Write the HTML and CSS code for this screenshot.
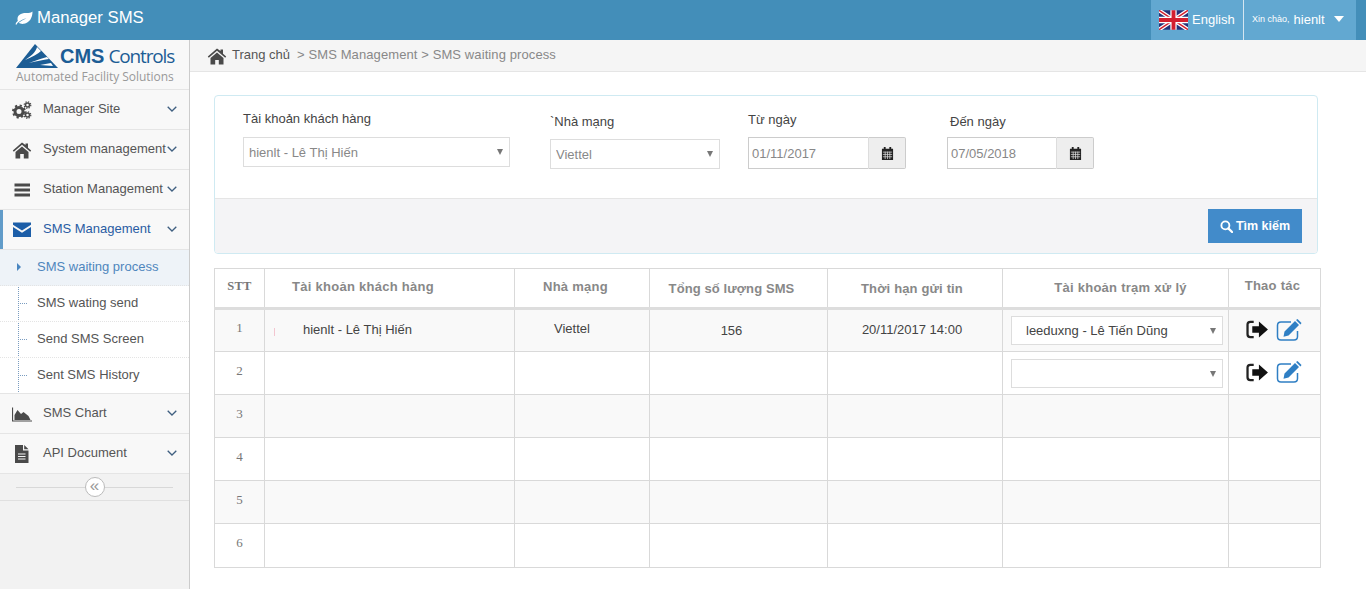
FILE: index.html
```html
<!DOCTYPE html>
<html lang="vi">
<head>
<meta charset="utf-8">
<title>Manager SMS</title>
<link rel="stylesheet" href="styles.css">
</head>
<body>
<header class="topbar">
  <div class="brand">
    <svg class="brand-leaf" viewBox="0 0 18 14"><path d="M17.5 .6C16 2 14.500 2 11 2 5.500 2 2.500 4.500 2.500 8c0 .8.100 1.300.300 1.900C1.500 11 .800 12 .500 13.200l.900.500C2 12.500 2.900 11.500 4 10.800 6.500 8.800 9 7.800 11.500 7.200 9 8.300 6 10 3.800 11.800 5 12.800 7 13.100 9 12.800c5.500-.8 8.500-6 8.500-12.200z"/></svg>
    <span>Manager SMS</span>
  </div>
  <div class="top-actions">
    <div class="lang">
      <svg class="flag" viewBox="0 0 60 40">
        <rect width="60" height="40" fill="#24337a"/>
        <path d="M0 0L60 40M60 0L0 40" stroke="#fff" stroke-width="8"/>
        <path d="M0 0L60 40M60 0L0 40" stroke="#d3202f" stroke-width="3"/>
        <path d="M30 0V40M0 20H60" stroke="#fff" stroke-width="13"/>
        <path d="M30 0V40M0 20H60" stroke="#d3202f" stroke-width="8"/>
      </svg>
      <span>English</span>
    </div>
    <div class="user">
      <small>Xin chào,</small>
      <span>hienlt</span>
      <i class="caret"></i>
    </div>
  </div>
</header>
<div class="shell">
  <aside class="sidebar">
    <div class="logo">
      <div class="logo-row">
        <svg class="logo-mark" viewBox="0 0 42 24">
          <path d="M19 0L42 24H0z" fill="#1c5d95"/>
          <path d="M21 3c-1 5-6 9-12 13 7-3 13-6 16-9zM13 19c8-3 14-5 18-6l2 2c-6 1-13 2-20 4zM24 21l11-2 2 3z" fill="#fff"/>
        </svg>
        <span class="logo-cms">CMS</span>
        <span class="logo-controls">Controls</span>
      </div>
      <div class="logo-tag">Automated Facility Solutions</div>
    </div>
    <nav>
      <a class="nav-item">
        <svg class="nav-icon" viewBox="0 0 20 18"><circle cx="7" cy="10.500" r="4" fill="none" stroke="#4a4a4a" stroke-width="3"/><circle cx="7" cy="10.500" r="6" fill="none" stroke="#4a4a4a" stroke-width="2" stroke-dasharray="2.200 2.500"/><circle cx="15.500" cy="4" r="2" fill="none" stroke="#4a4a4a" stroke-width="1.500"/><circle cx="15.500" cy="4" r="3.300" fill="none" stroke="#4a4a4a" stroke-width="1.200" stroke-dasharray="1.300 1.300"/><circle cx="15.500" cy="14" r="2" fill="none" stroke="#4a4a4a" stroke-width="1.500"/><circle cx="15.500" cy="14" r="3.300" fill="none" stroke="#4a4a4a" stroke-width="1.200" stroke-dasharray="1.300 1.300"/></svg>
        <span>Manager Site</span>
        <svg class="chev" viewBox="0 0 10 6"><path d="M.7.7L5 5 9.300.7"/></svg>
      </a>
      <a class="nav-item">
        <svg class="nav-icon" viewBox="0 0 20 18"><path d="M10 1.500L.8 9.600l1 1.200L10 3.700l8.200 7.100 1-1.200-3.200-2.800V2.500h-2.500v1.600zM3.500 11v6.500h4.700v-4.500h3.600v4.500h4.700V11L10 5.400z" fill="#4a4a4a"/></svg>
        <span>System management</span>
        <svg class="chev" viewBox="0 0 10 6"><path d="M.7.7L5 5 9.300.7"/></svg>
      </a>
      <a class="nav-item">
        <svg class="nav-icon" viewBox="0 0 20 18"><path d="M2.500 2.500h15.500v3H2.500zM2.500 7.500h15.500v3H2.500zM2.500 12.500h15.500v3H2.500z" fill="#4a4a4a"/></svg>
        <span>Station Management</span>
        <svg class="chev" viewBox="0 0 10 6"><path d="M.7.7L5 5 9.300.7"/></svg>
      </a>
      <a class="nav-item nav-open">
        <svg class="nav-icon" viewBox="0 0 20 18"><path d="M1 1.500h18v2.300L10 9.500 1 3.800zM1 6l9 5.800L19 6v10H1z" fill="#1c5ea8"/></svg>
        <span>SMS Management</span>
        <svg class="chev" viewBox="0 0 10 6"><path d="M.7.7L5 5 9.300.7"/></svg>
      </a>
      <ul class="subnav">
        <li class="sub-active">SMS waiting process</li>
        <li>SMS wating send</li>
        <li>Send SMS Screen</li>
        <li>Sent SMS History</li>
      </ul>
      <a class="nav-item">
        <svg class="nav-icon" viewBox="0 0 20 18"><path d="M.5 2.500V16H20" fill="none" stroke="#4a4a4a" stroke-width="1.200"/><path d="M2.500 15V10l3-5 3.500 4 2.500-2 5 4 2 4z" fill="#4a4a4a"/></svg>
        <span>SMS Chart</span>
        <svg class="chev" viewBox="0 0 10 6"><path d="M.7.7L5 5 9.300.7"/></svg>
      </a>
      <a class="nav-item">
        <svg class="nav-icon" viewBox="0 0 20 18"><path d="M3 0h8v5.500h5.500V18H3zM12.200 0l4.300 4.300h-4.300z" fill="#4a4a4a"/><path d="M6 9h7.500M6 11.500h7.500M6 14h7.500" stroke="#f5f5f5" stroke-width="1.200"/></svg>
        <span>API Document</span>
        <svg class="chev" viewBox="0 0 10 6"><path d="M.7.7L5 5 9.300.7"/></svg>
      </a>
    </nav>
    <div class="collapse">
      <button class="collapse-btn" type="button">«</button>
    </div>
  </aside>
  <main class="content">
    <div class="breadcrumb">
      <svg class="crumb-home" viewBox="0 0 20 18"><path d="M10 1.500L.8 9.600l1 1.200L10 3.700l8.200 7.100 1-1.200-3.200-2.800V2.500h-2.500v1.600zM3.500 11v6.500h4.700v-4.500h3.600v4.500h4.700V11L10 5.400z" fill="#4a4a4a"/></svg>
      <span class="crumb-first">Trang chủ</span>
      <span class="crumb-rest">&gt; SMS Management &gt; SMS waiting process</span>
    </div>
    <div class="page">
      <section class="filter">
        <div class="filter-body">
          <div class="field field-account">
            <label>Tài khoản khách hàng</label>
            <div class="select-wrap"><select><option>hienlt - Lê Thị Hiến</option></select></div>
          </div>
          <div class="field field-network">
            <label>`Nhà mạng</label>
            <div class="select-wrap"><select><option>Viettel</option></select></div>
          </div>
          <div class="field field-from">
            <label>Từ ngày</label>
            <div class="date-group">
              <input type="text" value="01/11/2017">
              <span class="date-addon"><svg class="cal" viewBox="0 0 14 14"><path d="M3 0h2v2.500H3zM9 0h2v2.500H9z" fill="#222"/><path d="M1 2h12v12H1z" fill="#222"/><path d="M2 5.500h10M2 8h10M2 10.500h10M4.500 5v8M7 5v8M9.500 5v8" stroke="#ddd" stroke-width=".8"/></svg></span>
            </div>
          </div>
          <div class="field field-to">
            <label>Đến ngày</label>
            <div class="date-group">
              <input type="text" value="07/05/2018">
              <span class="date-addon"><svg class="cal" viewBox="0 0 14 14"><path d="M3 0h2v2.500H3zM9 0h2v2.500H9z" fill="#222"/><path d="M1 2h12v12H1z" fill="#222"/><path d="M2 5.500h10M2 8h10M2 10.500h10M4.500 5v8M7 5v8M9.500 5v8" stroke="#ddd" stroke-width=".8"/></svg></span>
            </div>
          </div>
        </div>
        <div class="filter-foot">
          <button class="btn-search" type="button">
            <svg class="search-ico" viewBox="0 0 14 14"><circle cx="5.800" cy="5.800" r="4.300" fill="none" stroke="#fff" stroke-width="2"/><path d="M9 9l4 4" stroke="#fff" stroke-width="2.400" stroke-linecap="round"/></svg>
            <span>Tìm kiếm</span>
          </button>
        </div>
      </section>
      <table class="grid">
        <thead>
          <tr>
            <th class="c-stt">STT</th>
            <th class="c-acc">Tài khoản khách hàng</th>
            <th class="c-net">Nhà mạng</th>
            <th class="c-total">Tổng số lượng SMS</th>
            <th class="c-time">Thời hạn gửi tin</th>
            <th class="c-station">Tài khoản trạm xử lý</th>
            <th class="c-act">Thao tác</th>
          </tr>
        </thead>
        <tbody>
          <tr>
            <td class="c-stt">1</td>
            <td class="c-acc-val"><i class="tick"></i>hienlt - Lê Thị Hiến</td>
            <td class="c-net-val">Viettel</td>
            <td class="c-total-val">156</td>
            <td class="c-time-val">20/11/2017 14:00</td>
            <td class="c-select"><div class="select-wrap select-dark"><select><option>leeduxng - Lê Tiến Dũng</option></select></div></td>
            <td class="c-actions">
              <svg class="act-go" viewBox="0 0 24 20"><path d="M8 2H4.500C2.500 2 1.500 3 1.500 5v10c0 2 1 3 3 3H8" fill="none" stroke="#222" stroke-width="2.400"/><path d="M6.500 6.500h7V1.500L23 10l-9.500 8.500v-5h-7z" fill="#111"/></svg>
              <svg class="act-edit" viewBox="0 0 26 22"><path d="M15 3H5C2.800 3 1.500 4.300 1.500 6.500v11c0 2.200 1.300 3.500 3.500 3.500h13c2.200 0 3.500-1.300 3.500-3.500V12" fill="none" stroke="#2f7fc4" stroke-width="1.500"/><path d="M8.500 12.500L19 2l4 4-10.500 10.500-5 1.200zM20 1l1.500-1 4 4-1 1.500z" fill="#2f7fc4"/></svg>
            </td>
          </tr>
          <tr>
            <td class="c-stt">2</td>
            <td></td><td></td><td></td><td></td>
            <td class="c-select"><div class="select-wrap select-dark"><select><option></option></select></div></td>
            <td class="c-actions">
              <svg class="act-go" viewBox="0 0 24 20"><path d="M8 2H4.500C2.500 2 1.500 3 1.500 5v10c0 2 1 3 3 3H8" fill="none" stroke="#222" stroke-width="2.400"/><path d="M6.500 6.500h7V1.500L23 10l-9.500 8.500v-5h-7z" fill="#111"/></svg>
              <svg class="act-edit" viewBox="0 0 26 22"><path d="M15 3H5C2.800 3 1.500 4.300 1.500 6.500v11c0 2.200 1.300 3.500 3.500 3.500h13c2.200 0 3.500-1.300 3.500-3.500V12" fill="none" stroke="#2f7fc4" stroke-width="1.500"/><path d="M8.500 12.500L19 2l4 4-10.500 10.500-5 1.200zM20 1l1.500-1 4 4-1 1.500z" fill="#2f7fc4"/></svg>
            </td>
          </tr>
          <tr><td class="c-stt">3</td><td></td><td></td><td></td><td></td><td></td><td></td></tr>
          <tr><td class="c-stt">4</td><td></td><td></td><td></td><td></td><td></td><td></td></tr>
          <tr><td class="c-stt">5</td><td></td><td></td><td></td><td></td><td></td><td></td></tr>
          <tr class="row-last"><td class="c-stt">6</td><td></td><td></td><td></td><td></td><td></td><td></td></tr>
        </tbody>
      </table>
    </div>
  </main>
</div>
</body>
</html>
```
FILE: styles.css
```css
* { box-sizing: border-box; }
html, body { margin: 0; height: 100%; overflow: hidden; }
body { font-family: "Liberation Sans", Arial, sans-serif; font-size: 13px; color: #555; background: #fff; }

.topbar { height: 40px; background: #438eb9; color: #fff; display: flex; align-items: stretch; justify-content: space-between; }
.brand { display: flex; align-items: center; gap: 4px; padding: 0 0 4px 15px; font-size: 16.700px; }
.brand-leaf { width: 18px; height: 14px; fill: #fff; }
.top-actions { display: flex; margin-right: 10px; }
.lang { width: 92px; background: #62a8d1; display: flex; align-items: center; padding: 0 0 2px 8px; gap: 4px; font-size: 13px; }
.flag { width: 29px; height: 20px; display: block; margin-top: 2px; }
.user { width: 113px; background: #62a8d1; border-left: 1px solid #d5e6f1; display: flex; align-items: center; padding: 0 0 2px 8px; font-size: 13px; gap: 4px; }
.user small { font-size: 9px; }
.caret { margin-left: 5px; width: 0; height: 0; border-left: 5.500px solid transparent; border-right: 5.500px solid transparent; border-top: 6px solid #fff; }

.shell { display: flex; height: 549px; }
.sidebar { width: 190px; flex: none; background: #f2f2f2; border-right: 1px solid #ccc; }
.logo { height: 50px; background: #f8f8f8; border-bottom: 1px solid #e5e5e5; padding: 4px 0 0 16px; }
.logo-row { display: flex; align-items: center; height: 24px; }
.logo-mark { width: 42px; height: 24px; margin-right: 2px; }
.logo-cms { font-weight: bold; font-size: 20px; color: #1c5d95; margin-right: 4px; }
.logo-controls { font-family: "Open Sans", sans-serif; font-size: 19px; color: #1c5d95; letter-spacing: -1.150px; }
.logo-tag { font-family: "Open Sans", sans-serif; font-size: 12px; color: #999; line-height: 18px; letter-spacing: -.03px; white-space: nowrap; }

.nav-item { height: 40px; display: flex; align-items: center; padding: 0 0 2px 12px; background: #f8f8f8; border-bottom: 1px solid #e5e5e5; color: #555; position: relative; }
.nav-item span { margin-left: 11px; white-space: nowrap; }
.nav-icon { width: 20px; height: 18px; flex: none; margin-top: 3px; }
.chev { width: 10px; height: 6px; fill: none; stroke: #3f5f80; stroke-width: 1.300; position: absolute; right: 12px; top: 16px; }
.nav-open { color: #2a5ca3; }
.nav-open::before { content: ""; position: absolute; left: 0; top: 0; bottom: 0; width: 3px; background: #629cc9; }
.subnav { list-style: none; margin: 0; padding: 0; height: 144px; background: #fff; position: relative; }
.subnav::before { content: ""; position: absolute; left: 18px; top: 0; bottom: 0; border-left: 1px dotted #7a9cc0; }
.subnav li { height: 36px; line-height: 34px; padding-left: 37px; border-bottom: 1px dotted #e4e4e4; position: relative; white-space: nowrap; }
.subnav li:last-child { border-bottom: 1px solid #e5e5e5; }
.subnav li::before { content: ""; position: absolute; left: 20px; top: 17px; width: 7px; border-top: 1px dotted #7a9cc0; }
.subnav .sub-active { background: #eef3f8; color: #4f86bd; }
.subnav .sub-active::before { left: 17px; top: 13px; width: 0; border-top: 4px solid transparent; border-bottom: 4px solid transparent; border-left: 4px solid #4a86c0; }

.collapse { height: 27px; background: #f2f2f2; border-bottom: 1px solid #e0e0e0; display: flex; align-items: center; justify-content: center; position: relative; }
.collapse::before { content: ""; position: absolute; left: 16px; right: 16px; top: 13px; border-top: 1px solid #d8d8d8; }
.collapse-btn { position: relative; width: 20px; height: 20px; padding: 0 0 3px; border: 1px solid #bbb; border-radius: 50%; background: #fff; color: #999; font: 17px/14px "Liberation Sans", sans-serif; }

.content { flex: 1; min-width: 0; }
.breadcrumb { height: 32px; background: #f5f5f5; border-bottom: 1px solid #e5e5e5; display: flex; align-items: center; padding: 0 0 2px 17px; white-space: nowrap; }
.crumb-home { width: 20px; height: 18px; margin: 2px 5px 0 0; }
.crumb-first { color: #555; margin-right: 7px; }
.crumb-rest { color: #888; letter-spacing: .1px; }

.page { padding: 23px 45px 0 24px; }
.filter { width: 1104px; border: 1px solid #cfeaf2; border-radius: 4px; overflow: hidden; }
.filter-body { height: 102px; display: flex; padding-left: 28px; }
.filter-foot { height: 55px; background: #f4f4f6; border-top: 1px solid #e5e5e5; display: flex; justify-content: flex-end; align-items: flex-start; padding: 10px 15px 0 0; }
.field label { display: block; color: #444; line-height: 16px; margin-bottom: 10px; white-space: nowrap; }
.field-account { width: 267px; margin-right: 40px; padding-top: 15px; }
.field-network { width: 170px; margin-right: 28px; padding-top: 18px; }
.field-from { width: 158px; margin-right: 41px; padding-top: 16px; }
.field-to { width: 147px; padding-top: 18px; }
.field-network label { margin-bottom: 9px; }
.field-from label { margin-bottom: 9px; }
.field-to label { margin-bottom: 7px; padding-left: 3px; }
.select-wrap { position: relative; }
.select-wrap::after { content: ""; position: absolute; right: 7px; top: 12px; width: 0; height: 0; border-left: 3.500px solid transparent; border-right: 3.500px solid transparent; border-top: 6px solid #777; pointer-events: none; }
.select-wrap select { appearance: none; -webkit-appearance: none; width: 100%; height: 30px; padding: 0 0 0 5px; border: 1px solid #ddd; border-radius: 0; background: #fff; color: #888; font: 13px "Liberation Sans", sans-serif; }
.date-group { display: flex; height: 32px; }
.date-group input { flex: 1; min-width: 0; padding: 0 3px; border: 1px solid #ccc; border-right: 0; color: #888; font: 13px "Liberation Sans", sans-serif; }
.date-addon { width: 38px; flex: none; background: #eee; border: 1px solid #ccc; border-left-color: #ddd; border-radius: 0 2px 2px 0; display: flex; align-items: center; justify-content: center; }
.cal { width: 13px; height: 13px; }
.btn-search { width: 94px; height: 34px; background: #428bca; border: 0; color: #fff; font: bold 12.500px "Liberation Sans", sans-serif; display: flex; align-items: center; justify-content: center; gap: 3px; padding: 0; }
.search-ico { width: 13px; height: 13px; }

.grid { margin-top: 14px; width: 1107px; border-collapse: collapse; table-layout: fixed; border: 1px solid #d9d9d9; }
.grid th, .grid td { border: 1px solid #d9d9d9; padding: 0; }
.grid thead tr { height: 40px; }
.grid th { color: #888; font-size: 13px; font-weight: bold; background: #fff; border-bottom: 3px solid #ddd; letter-spacing: .27px; padding-bottom: 3px; }
.grid tbody tr { height: 43px; }
.grid tbody .row-last { height: 44px; }
.grid tbody tr:nth-child(odd) { background: #f9f9f9; }
.grid td { font-size: 12px; color: #444; padding-bottom: 2px; }
.grid .c-stt { width: 50px; text-align: center; font-family: "Liberation Serif", serif; font-size: 13px; color: #777; padding-bottom: 5px; }
.grid th.c-stt { color: #777; font-size: 12.500px; letter-spacing: .3px; padding-bottom: 3px; }
.grid .c-acc { width: 250px; text-align: left; padding-left: 27px; }
.grid .c-net { width: 135px; padding-right: 13px; }
.grid .c-total { width: 178px; padding-right: 14px; padding-bottom: 0; letter-spacing: .1px; }
.grid .c-time { width: 175px; padding-right: 6px; padding-bottom: 0; letter-spacing: .15px; }
.grid .c-station { width: 226px; padding-left: 10px; padding-bottom: 2px; }
.grid .c-act { width: 92px; padding-right: 4px; padding-bottom: 5px; }
.grid .c-acc-val { padding-left: 38px; position: relative; font-size: 13px; }
.tick { position: absolute; left: 9px; top: 18px; height: 8px; border-left: 1px solid #f3c6d0; }
.grid .c-net-val { text-align: center; font-size: 13px; padding-right: 20px; padding-bottom: 4px; }
.grid .c-total-val { text-align: center; font-size: 13px; padding-right: 14px; padding-bottom: 0; }
.grid .c-time-val { text-align: center; font-size: 13px; padding-right: 6px; }
.grid .c-select { padding: 0 5px 0 8px; }
.select-dark select { color: #444; padding-left: 14px; height: 29px; }
.grid .c-actions { white-space: nowrap; font-size: 0; padding: 0 0 2px 17px; }
.act-go { height: 19px; width: 23px; margin-right: 7px; vertical-align: middle; }
.act-edit { height: 22px; width: 26px; vertical-align: middle; }
```
